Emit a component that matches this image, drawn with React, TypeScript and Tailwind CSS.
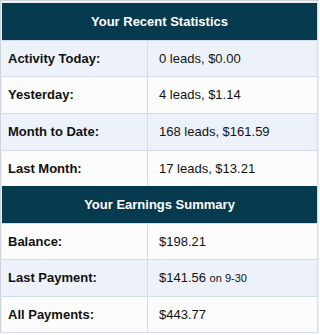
import React from 'react'

type Row = { label: string; value: React.ReactNode; shade: boolean; h: string }

const stats: Row[] = [
  { label: 'Activity Today:', value: '0 leads, $0.00', shade: true, h: 'h-[36px]' },
  { label: 'Yesterday:', value: '4 leads, $1.14', shade: false, h: 'h-[37px]' },
  { label: 'Month to Date:', value: '168 leads, $161.59', shade: true, h: 'h-[37px]' },
  { label: 'Last Month:', value: '17 leads, $13.21', shade: false, h: 'h-[36px]' },
]

const earnings: Row[] = [
  { label: 'Balance:', value: '$198.21', shade: false, h: 'h-[36px]' },
  {
    label: 'Last Payment:',
    value: (
      <>
        $141.56 <span className="text-[11px]">on 9-30</span>
      </>
    ),
    shade: true,
    h: 'h-[37px]',
  },
  { label: 'All Payments:', value: '$443.77', shade: false, h: 'h-[36px]' },
]

const Header = ({ title, h }: { title: string; h: string }) => (
  <div className={`${h} flex items-center justify-center bg-[#063a4f] text-white font-bold text-[13px]`}>
    {title}
  </div>
)

const DataRow = ({ row }: { row: Row }) => (
  <div
    className={`${row.h} flex border-t border-[#d3dcef] ${row.shade ? 'bg-[#edf1fa]' : 'bg-[#fcfcfd]'}`}
  >
    <div className="w-[146px] shrink-0 flex items-center pl-[6px] font-bold text-[13px] text-[#111] border-r border-[#d3dcef]">
      {row.label}
    </div>
    <div className="flex-1 flex items-center pl-[11px] text-[13px] text-[#111]">
      <span>{row.value}</span>
    </div>
  </div>
)

export default function App() {
  return (
    <div className="w-[320px] h-[335px] bg-white" style={{ fontFamily: '"Liberation Sans", Arial, sans-serif' }}>
      <div className="w-[319px] border-t border-l border-[#cdd3dd] pt-[2px] pl-[1px] bg-[#eef1f6]">
        <div className="w-[316px] border-b border-r border-[#d3dcef] bg-white">
          <Header title="Your Recent Statistics" h="h-[37px]" />
          {stats.map((r, i) => (
            <DataRow key={i} row={r} />
          ))}
          <Header title="Your Earnings Summary" h="h-[37px]" />
          {earnings.map((r, i) => (
            <DataRow key={i} row={r} />
          ))}
        </div>
      </div>
    </div>
  )
}
